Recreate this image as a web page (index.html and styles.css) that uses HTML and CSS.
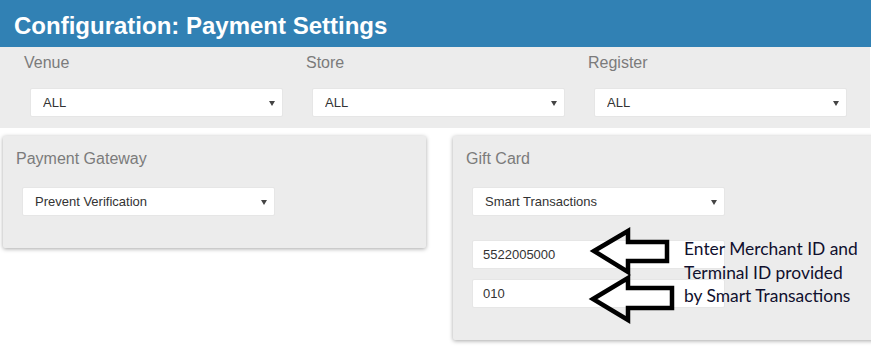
FILE: index.html
```html
<!DOCTYPE html>
<html lang="en">
<head>
    <meta charset="UTF-8">
    <meta name="viewport" content="width=device-width, initial-scale=1.0">
    <title>Configuration: Payment Settings</title>
    <link rel="stylesheet" href="styles.css">
</head>
<body>
    <header class="page-header">
        <h1>Configuration: Payment Settings</h1>
    </header>

    <section class="filters">
        <div class="filter-col">
            <label for="venue">Venue</label>
            <div class="select-wrap">
                <select id="venue"><option>ALL</option></select>
            </div>
        </div>
        <div class="filter-col">
            <label for="store">Store</label>
            <div class="select-wrap">
                <select id="store"><option>ALL</option></select>
            </div>
        </div>
        <div class="filter-col">
            <label for="register">Register</label>
            <div class="select-wrap">
                <select id="register"><option>ALL</option></select>
            </div>
        </div>
    </section>

    <div class="panels">
        <div class="panel gateway">
            <h2>Payment Gateway</h2>
            <div class="select-wrap">
                <select id="gateway"><option>Prevent Verification</option></select>
            </div>
        </div>

        <div class="panel giftcard">
            <h2>Gift Card</h2>
            <div class="select-wrap">
                <select id="giftProvider"><option>Smart Transactions</option></select>
            </div>
            <input type="text" class="field merchant" value="5522005000">
            <input type="text" class="field terminal" value="010">

            <!-- annotation drawn over the inputs -->
            <svg class="note-arrows" width="90" height="100" viewBox="588 226 90 100">
                <polygon points="594,251 628,231 628,242 667,242 667,261 628,261 628,272" />
                <polygon points="593,299 628,278 628,288 672,288 672,308 628,308 628,320" />
            </svg>
            <p class="note">Enter Merchant ID and<br>Terminal ID provided<br>by Smart Transactions</p>
        </div>
    </div>
</body>
</html>
```

FILE: styles.css
```css
html, body {
    overflow: hidden;
}

body {
    margin: 0;
    font-family: Arial, "Liberation Sans", sans-serif;
    background-color: #fff;
    width: 871px;
    height: 356px;
}

.page-header {
    background-color: #3181b4;
    height: 47px;
    padding: 4px 14px 0;
    box-sizing: border-box;
}

.page-header h1 {
    margin: 0;
    color: #fff;
    font-size: 24px;
    font-weight: bold;
    line-height: 43px;
}

/* Top filter strip */
.filters {
    display: flex;
    background-color: #ececec;
    width: 870px;
    height: 81px;
    padding: 7px 0 0 24px;
    box-sizing: border-box;
}

.filter-col {
    width: 282px;
}

.filter-col label {
    display: block;
    font-size: 16px;
    line-height: 18px;
    color: #7b7b7b;
    margin-bottom: 16px;
}

.filter-col .select-wrap {
    margin-left: 6px;
}

/* Select boxes */
.select-wrap {
    position: relative;
    width: 253px;
    height: 29px;
}

.select-wrap select {
    -webkit-appearance: none;
    appearance: none;
    width: 100%;
    height: 100%;
    border: 1px solid #e6e6e6;
    border-radius: 2px;
    background-color: #fff;
    padding: 0 0 0 12px;
    font-family: Arial, "Liberation Sans", sans-serif;
    font-size: 13px;
    color: #333;
    box-sizing: border-box;
    outline: none;
}

.select-wrap::after {
    content: "";
    position: absolute;
    right: 8px;
    top: 13px;
    border-left: 3px solid transparent;
    border-right: 3px solid transparent;
    border-top: 5px solid #444;
    pointer-events: none;
}

/* Panels */
.panels {
    display: flex;
    gap: 27px;
    margin: 8px 0 0 3px;
    align-items: flex-start;
}

.panel {
    position: relative;
    flex-shrink: 0;
    width: 423px;
    background-color: #ececec;
    border-radius: 2px;
    box-shadow: 0 1px 4px rgba(0, 0, 0, 0.35);
    padding: 14px 0 32px 13px;
    box-sizing: border-box;
}

.panel h2 {
    margin: 0 0 19px;
    font-size: 16px;
    line-height: 18px;
    font-weight: normal;
    color: #7b7b7b;
}

.panel .select-wrap {
    margin-left: 6px;
}

.field {
    display: block;
    width: 253px;
    height: 29px;
    margin-left: 6px;
    border: 1px solid #e6e6e6;
    border-radius: 2px;
    background-color: #fff;
    padding: 0 0 0 10px;
    font-family: Arial, "Liberation Sans", sans-serif;
    font-size: 13px;
    color: #333;
    box-sizing: border-box;
    outline: none;
}

.field.merchant {
    margin-top: 24px;
}

.field.terminal {
    margin-top: 10px;
}

/* Annotation overlay */
.note-arrows {
    position: absolute;
    left: 135px;
    top: 90px;
}

.note-arrows polygon {
    fill: none;
    stroke: #000;
    stroke-width: 4.5;
    stroke-linejoin: miter;
}

.note {
    position: absolute;
    left: 231px;
    top: 101px;
    margin: 0;
    font-family: Lato, "Open Sans", sans-serif;
    font-size: 17.4px;
    line-height: 23.5px;
    color: #10102e;
    white-space: nowrap;
}
```
